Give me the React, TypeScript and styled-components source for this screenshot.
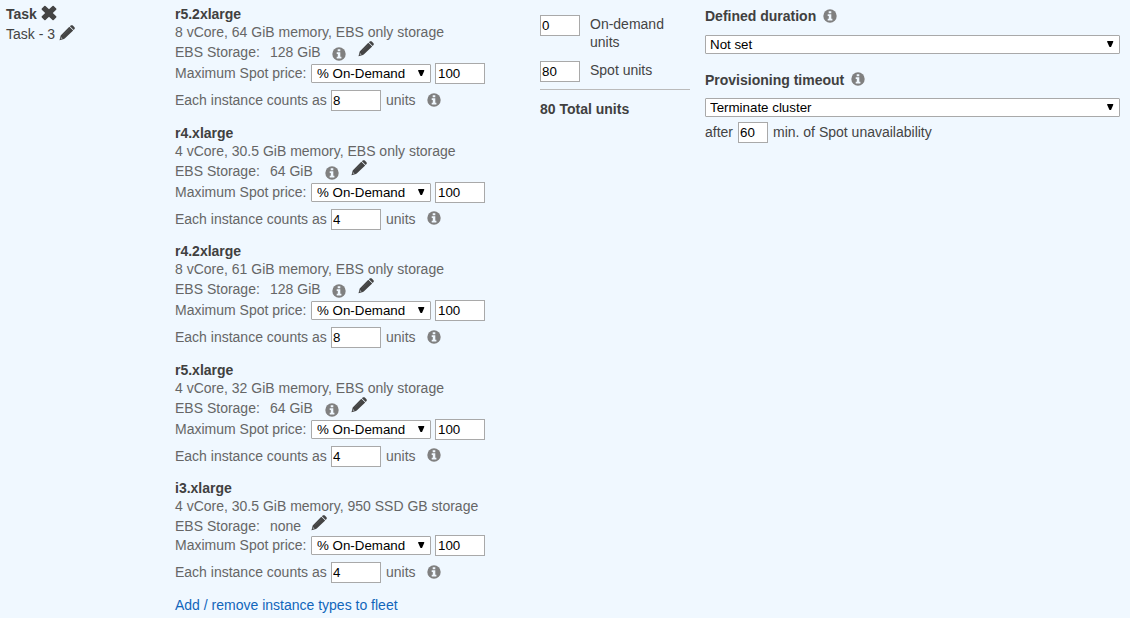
import React from 'react';
import styled, { createGlobalStyle } from 'styled-components';

const GlobalStyle = createGlobalStyle`
  * { box-sizing: border-box; }
  body {
    margin: 0;
    background: #f0f8ff;
    color: #444;
    font: 14px/18px "Liberation Sans", Arial, sans-serif;
  }
`;

const Page = styled.main`
  display: grid;
  grid-template-columns: 170px 365px 165px 415px;
  width: 1130px;
  height: 618px;
  padding: 5px 10px 0 5px;
  overflow: hidden;
  background: #f0f8ff;
`;

const Column = styled.section<{ $indent?: number }>`
  display: flex;
  flex-direction: column;
  align-items: flex-start;
  padding-left: ${(p) => p.$indent ?? 0}px;
  white-space: nowrap;
`;

const Row = styled.div<{ $height?: number; $top?: number; $inset?: number }>`
  display: flex;
  align-items: center;
  height: ${(p) => p.$height ?? 18}px;
  margin-top: ${(p) => p.$top ?? 0}px;
  padding-top: ${(p) => p.$inset ?? 0}px;
`;

const Strong = styled.strong`
  color: #404040;
`;

const Icon = styled.svg<{ $left?: number; $top?: number }>`
  flex: none;
  display: block;
  margin-left: ${(p) => p.$left ?? 0}px;
  margin-top: ${(p) => p.$top ?? 0}px;
`;

const Instance = styled.article<{ $height: number }>`
  height: ${(p) => p.$height}px;
  color: #666;
`;

const Label = styled.span<{ $width?: number; $left?: number }>`
  flex: none;
  width: ${(p) => (p.$width ? `${p.$width}px` : 'auto')};
  margin-left: ${(p) => p.$left ?? 0}px;
`;

const FieldLabel = styled(Label)`
  margin-top: -0.8px;
`;

const Field = styled.input<{ $width: number; $left?: number; $pad?: number }>`
  flex: none;
  width: ${(p) => p.$width}px;
  height: 21px;
  margin: 0 0 0 ${(p) => p.$left ?? 0}px;
  padding: 0 0 0 ${(p) => p.$pad ?? 1}px;
  border: 1px solid #a9a9a9;
  border-radius: 0;
  outline: none;
  background: #fff;
  color: #000;
  font: 13.333px "Liberation Sans", Arial, sans-serif;
`;

const SelectBox = styled.span<{ $width: number }>`
  position: relative;
  flex: none;
  display: block;
  width: ${(p) => p.$width}px;
  height: 19px;
`;

const NativeSelect = styled.select<{ $pad: number }>`
  display: block;
  appearance: none;
  width: 100%;
  height: 19px;
  margin: 0;
  padding: 0 4px 0 ${(p) => p.$pad}px;
  border: 1px solid #a9a9a9;
  border-radius: 1px;
  background: #fff;
  color: #000;
  font: 13.333px "Liberation Sans", Arial, sans-serif;
`;

const Arrow = styled.svg`
  position: absolute;
  right: 6px;
  top: 6px;
  pointer-events: none;
`;

const Link = styled.a`
  color: #1166bb;
  text-decoration: none;
`;

const UnitRow = styled.div<{ $height: number }>`
  display: flex;
  align-items: flex-start;
  height: ${(p) => p.$height}px;
`;

const UnitLabel = styled.span`
  width: 90px;
  margin-left: 10px;
  white-space: normal;
`;

const Total = styled.div`
  width: 150px;
  padding-top: 10px;
  border-top: 1px solid #bbb;
`;

type IconProps = { left?: number; top?: number };

const Info = ({ left, top }: IconProps) => (
  <Icon $left={left} $top={top} width="14" height="14" viewBox="0 0 14 14">
    <circle cx="7" cy="7" r="6.7" fill="#808080" />
    <path fill="#f0f8ff" d="M5.7 2.3h2.6v2H5.7zM4.7 5.3h3.6v4.4h1.1v1.7H4.7V9.7h1.1V7H4.7z" />
  </Icon>
);

const Pencil = ({ left, top }: IconProps) => (
  <Icon $left={left} $top={top} width="16" height="16" viewBox="0 0 16 16" fill="#444">
    <path d="M10.900 1.200 11.700.600c.7-.5 1.500-.5 2.100 0l1.700 1.600c.5.6.5 1.300 0 1.900l-.8.900zM10.300 1.700l3.900 3.800-8.200 7.700L5 13.900.5 15.200 1.700 10.600z" />
    <path d="m4.200 10 6.300-5.900" stroke="#606264" strokeWidth=".5" />
    <path d="m2 12 1.600 1.600-1.400.4-.6-.6z" fill="#a4a8ac" />
  </Icon>
);

const Cross = ({ left, top }: IconProps) => (
  <Icon $left={left} $top={top} width="16" height="16" viewBox="0 0 16 16">
    <path fill="#444" d="M4.500 1.100 8 4.300l3.500-3.200q.6-.5 1.200 0l2.500 2.400q.5.600 0 1.200L11.800 8l3.400 3.300q.5.600 0 1.200l-2.500 2.400q-.6.500-1.200 0L8 11.700l-3.500 3.200q-.6.500-1.200 0L.8 12.500q-.5-.6 0-1.200L4.200 8 .8 4.700q-.5-.6 0-1.200l2.500-2.400q.6-.5 1.200 0z" />
  </Icon>
);

const Select = ({ width, value, pad = 4 }: { width: number; value: string; pad?: number }) => (
  <SelectBox $width={width}>
    <NativeSelect $pad={pad} defaultValue={value}>
      <option>{value}</option>
    </NativeSelect>
    <Arrow width="7" height="7" viewBox="0 0 7 7">
      <path d="M.2 0h6v1L4 6H2.500L.2 1z" />
    </Arrow>
  </SelectBox>
);

const instances = [
  { name: 'r5.2xlarge', spec: '8 vCore, 64 GiB memory, EBS only storage', ebs: '128 GiB', units: '8' },
  { name: 'r4.xlarge', spec: '4 vCore, 30.5 GiB memory, EBS only storage', ebs: '64 GiB', units: '4' },
  { name: 'r4.2xlarge', spec: '8 vCore, 61 GiB memory, EBS only storage', ebs: '128 GiB', units: '8' },
  { name: 'r5.xlarge', spec: '4 vCore, 32 GiB memory, EBS only storage', ebs: '64 GiB', units: '4' },
  { name: 'i3.xlarge', spec: '4 vCore, 30.5 GiB memory, 950 SSD GB storage', ebs: 'none', units: '4' },
];

export default function App() {
  return (
    <>
      <GlobalStyle />
      <Page>
        <Column $indent={1}>
          <Row><Strong>Task</Strong><Cross left={4} top={-2} /></Row>
          <Row $height={22}>Task - 3<Pencil left={4} top={-2} /></Row>
        </Column>

        <Column>
          {instances.map((item) => {
            const none = item.ebs === 'none';
            return (
              <Instance key={item.name} $height={none ? 117 : 118.5}>
                <Row><Strong>{item.name}</Strong></Row>
                <Row>{item.spec}</Row>
                <Row $height={none ? 20 : 22} $inset={none ? 2 : 0}>
                  <Label $width={95}>EBS Storage:</Label>
                  <Label>{item.ebs}</Label>
                  {!none && <Info left={11.8} top={4} />}
                  <Pencil left={none ? 10 : 12} top={-6} />
                </Row>
                <Row $height={21}>
                  <FieldLabel $width={136}>Maximum Spot price:</FieldLabel>
                  <Select width={120} value="% On-Demand" pad={5} />
                  <Field $width={50} $left={4} $pad={2} defaultValue="100" />
                </Row>
                <Row $height={21} $top={6}>
                  <FieldLabel $width={156}>Each instance counts as</FieldLabel>
                  <Field $width={50} defaultValue={item.units} />
                  <FieldLabel $width={41} $left={5}>units</FieldLabel>
                  <Info top={-2} />
                </Row>
              </Instance>
            );
          })}
          <Link>Add / remove instance types to fleet</Link>
        </Column>

        <Column>
          <Row $height={10} />
          <UnitRow $height={46}>
            <Field $width={40} defaultValue="0" />
            <UnitLabel>On-demand units</UnitLabel>
          </UnitRow>
          <UnitRow $height={28}>
            <Field $width={40} defaultValue="80" />
            <UnitLabel>Spot units</UnitLabel>
          </UnitRow>
          <Total><Strong>80 Total units</Strong></Total>
        </Column>

        <Column>
          <Row $height={22}><Strong>Defined duration</Strong><Info left={7} /></Row>
          <Row $height={19} $top={8}><Select width={415} value="Not set" /></Row>
          <Row $height={22} $top={15}><Strong>Provisioning timeout</Strong><Info left={7} top={-2} /></Row>
          <Row $height={19} $top={7}><Select width={415} value="Terminate cluster" /></Row>
          <Row $height={21} $top={5}>
            <FieldLabel $width={33}>after</FieldLabel>
            <Field $width={30} defaultValue="60" />
            <FieldLabel $left={5}>min. of Spot unavailability</FieldLabel>
          </Row>
        </Column>
      </Page>
    </>
  );
}
